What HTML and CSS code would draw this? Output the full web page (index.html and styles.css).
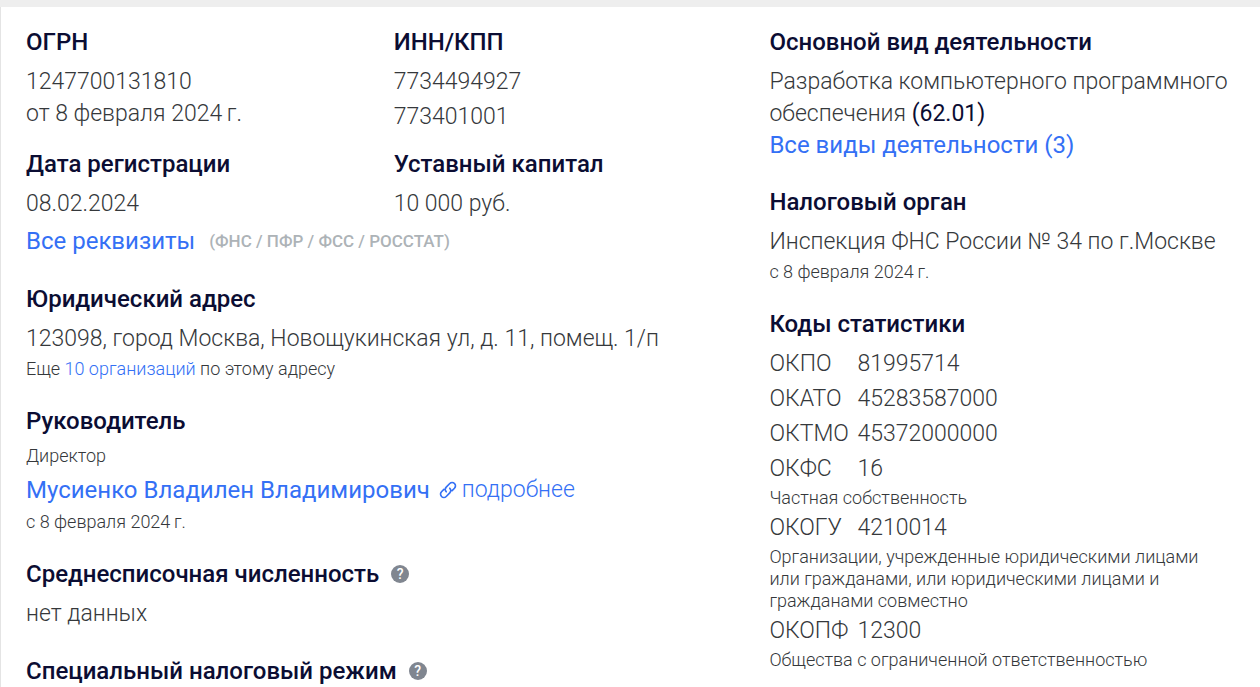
FILE: index.html
```html
<!DOCTYPE html>
<html lang="ru">
<head>
    <meta charset="UTF-8">
    <meta name="viewport" content="width=device-width, initial-scale=1.0">
    <title>Реквизиты организации</title>
    <link rel="stylesheet" href="styles.css">
</head>
<body>
    <main class="card">
        <div class="main-col">
            <div class="pair">
                <section>
                    <h2>ОГРН</h2>
                    <p>1247700131810</p>
                    <p>от 8 февраля 2024&#8201;г.</p>
                </section>
                <section>
                    <h2>ИНН/КПП</h2>
                    <p>7734494927</p>
                    <p class="next-code">773401001</p>
                </section>
                <section>
                    <h2>Дата регистрации</h2>
                    <p>08.02.2024</p>
                </section>
                <section>
                    <h2>Уставный капитал</h2>
                    <p>10 000 руб.</p>
                </section>
            </div>
            <p class="all-details"><a class="main-link" href="#">Все реквизиты</a> <span class="hint">(ФНС / ПФР / ФСС / РОССТАТ)</span></p>
            <section class="block">
                <h2>Юридический адрес</h2>
                <p>123098, город Москва, Новощукинская ул, д. 11, помещ. 1/п</p>
                <p class="note">Еще <a href="#">10 организаций</a> по этому адресу</p>
            </section>
            <section class="block">
                <h2>Руководитель</h2>
                <p class="note role">Директор</p>
                <p class="person">
                    <a class="main-link" href="#">Мусиенко Владилен Владимирович</a>
                    <a class="more" href="#">
                        <svg class="link-icon" viewBox="0 0 24 24" aria-hidden="true"><path transform="rotate(-45 12 12)" d="M9 8H5a4 4 0 0 0 0 8h6a4 4 0 0 0 4-4M15 16h4a4 4 0 0 0 0-8h-6a4 4 0 0 0-4 4"/></svg>
                        подробнее
                    </a>
                </p>
                <p class="note since">с 8 февраля 2024&#8201;г.</p>
            </section>
            <section class="block">
                <h2>Среднесписочная численность <button class="help" type="button" aria-label="Подсказка: численность">?</button></h2>
                <p>нет данных</p>
            </section>
            <section class="block">
                <h2>Специальный налоговый режим <button class="help" type="button" aria-label="Подсказка: налоговый режим">?</button></h2>
            </section>
        </div>

        <div class="side-col">
            <section>
                <h2>Основной вид деятельности</h2>
                <p>Разработка компьютерного программного обеспечения <b>(62.01)</b></p>
                <p class="all-kinds"><a class="main-link" href="#">Все виды деятельности (3)</a></p>
            </section>
            <section class="block">
                <h2>Налоговый орган</h2>
                <p>Инспекция ФНС России № 34 по г.Москве</p>
                <p class="note">с 8 февраля 2024&#8201;г.</p>
            </section>
            <section class="block">
                <h2>Коды статистики</h2>
                <dl class="codes">
                    <dt>ОКПО</dt><dd>81995714</dd>
                    <dt>ОКАТО</dt><dd>45283587000</dd>
                    <dt>ОКТМО</dt><dd>45372000000</dd>
                    <dt>ОКФС</dt><dd>16</dd>
                    <dd class="note">Частная собственность</dd>
                    <dt>ОКОГУ</dt><dd>4210014</dd>
                    <dd class="note">Организации, учрежденные юридическими лицами или гражданами, или юридическими лицами и гражданами совместно</dd>
                    <dt>ОКОПФ</dt><dd>12300</dd>
                    <dd class="note">Общества с ограниченной ответственностью</dd>
                </dl>
            </section>
        </div>
    </main>
</body>
</html>
```
FILE: styles.css
```css
* { box-sizing: border-box; margin: 0; padding: 0; }
body {
    border-top: 7px solid #eee;
    background: #fff;
    color: #35383b;
    font: 300 23px/32px Roboto, "Open Sans", sans-serif;
}
.card {
    display: grid;
    grid-template-columns: 8fr 5fr;
    min-height: calc(100vh - 7px);
    padding: 21px 26px 0 25px;
    border-left: 1px solid #e4e4e4;
}
h2 {
    display: flex;
    align-items: center;
    margin-bottom: 10px;
    color: #0b0d33;
    font-size: 24px;
    font-weight: 500;
    line-height: 28px;
}
a { color: #3470f5; text-decoration: none; }
a:hover { text-decoration: underline; }
b { color: #0b0d33; font-weight: 400; }
.main-link { font-size: 24px; font-weight: 400; }

.pair {
    display: grid;
    grid-template-columns: 1fr 1fr;
    row-gap: 17px;
    padding-right: 8px;
}
.next-code { margin-top: 3px; }
.all-details {
    display: flex;
    align-items: center;
    gap: 14px;
    margin-top: 5px;
}
.all-kinds { line-height: 31px; }
.hint { color: #adb3b7; font-size: 17px; font-weight: 500; }
.block { margin-top: 27px; }
.all-details + .block { margin-top: 28px; }

.note { margin-top: 3px; font-size: 18px; line-height: 22px; }
.role { margin-top: 0; }
.person {
    display: flex;
    flex-wrap: wrap;
    column-gap: 8px;
    margin-top: 7px;
}
.since { margin-top: 5px; }
.more { display: flex; align-items: center; gap: 4px; }
.link-icon {
    width: 20px;
    height: 20px;
    fill: none;
    stroke: currentColor;
    stroke-width: 2;
    stroke-linecap: round;
}
.help {
    width: 18px;
    height: 18px;
    margin-left: 12px;
    border: none;
    border-radius: 50%;
    background: #808690;
    color: #fff;
    font: 500 14px/18px Roboto, sans-serif;
    cursor: pointer;
}

.side-col { padding-right: 4px; }
.codes {
    display: grid;
    grid-template-columns: 88px 1fr;
    row-gap: 3px;
}
.codes .note { grid-column: 1 / -1; margin-top: -1px; }
```
